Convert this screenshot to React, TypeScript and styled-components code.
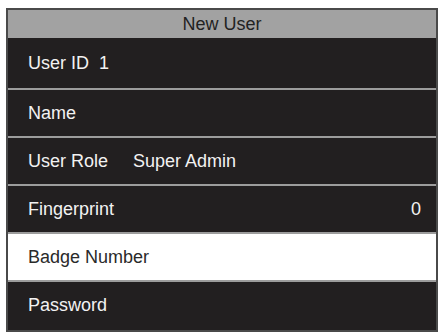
import styled, { createGlobalStyle } from "styled-components";

const GlobalStyle = createGlobalStyle`
  html, body {
    margin: 0;
    padding: 0;
    background: #ffffff;
  }
  body {
    font-family: "Liberation Sans", Arial, sans-serif;
  }
`;

const Screen = styled.div`
  display: flex;
  flex-direction: column;
  width: 432px;
  height: 324px;
  margin: 8px 0 0 6px;
  box-sizing: border-box;
  border: 2px solid #4a4a4a;
  background: #221f20;
`;

const Header = styled.div`
  display: flex;
  align-items: center;
  justify-content: center;
  height: 28px;
  flex-shrink: 0;
  background: #a2a2a2;
  color: #222222;
  font-size: 18px;
`;

const Row = styled.div<{ $selected?: boolean; $first?: boolean }>`
  display: flex;
  align-items: center;
  height: ${(p) => (p.$first ? "50px" : "48px")};
  flex-shrink: 0;
  box-sizing: border-box;
  padding: 0 15px 0 20px;
  border-top: ${(p) => (p.$first ? "none" : "2px solid #9c9c9c")};
  background: ${(p) => (p.$selected ? "#ffffff" : "#221f20")};
  color: ${(p) => (p.$selected ? "#2a2a2a" : "#f2f2f2")};
  font-size: 18px;
`;

const Label = styled.span<{ $gap?: number }>`
  margin-right: ${(p) => p.$gap ?? 0}px;
`;

const Value = styled.span<{ $right?: boolean }>`
  margin-left: ${(p) => (p.$right ? "auto" : "0")};
`;

type Item = { label: string; value?: string; gap?: number; right?: boolean };

const items: Item[] = [
  { label: "User ID", value: "1", gap: 10 },
  { label: "Name" },
  { label: "User Role", value: "Super Admin", gap: 25 },
  { label: "Fingerprint", value: "0", right: true },
  { label: "Badge Number" },
  { label: "Password" },
];

const App = () => {
  const selected = 4;
  return (
    <>
      <GlobalStyle />
      <Screen>
        <Header>New User</Header>
        {items.map((item, i) => (
          <Row key={item.label} $first={i === 0} $selected={i === selected}>
            <Label $gap={item.gap}>{item.label}</Label>
            {item.value && <Value $right={item.right}>{item.value}</Value>}
          </Row>
        ))}
      </Screen>
    </>
  );
};

export default App;
